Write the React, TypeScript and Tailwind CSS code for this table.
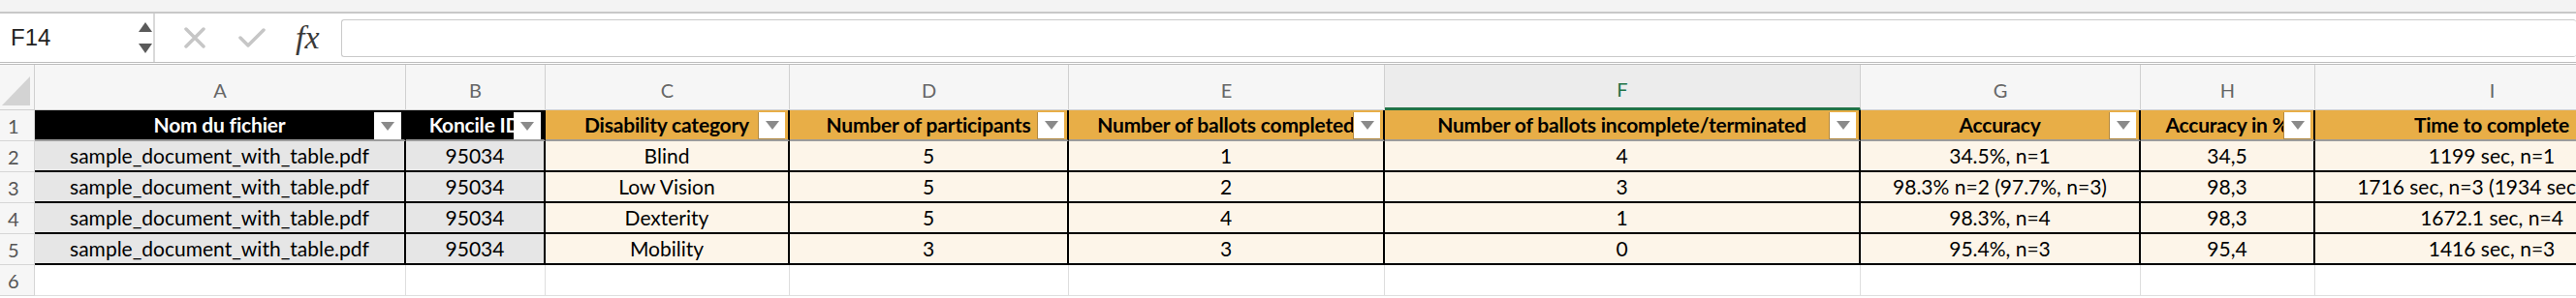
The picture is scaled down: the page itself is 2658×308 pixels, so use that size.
type Col = { letter: string; header: string; dark?: boolean };

const cols: Col[] = [
  { letter: "A", header: "Nom du fichier", dark: true },
  { letter: "B", header: "Koncile ID", dark: true },
  { letter: "C", header: "Disability category" },
  { letter: "D", header: "Number of participants" },
  { letter: "E", header: "Number of ballots completed" },
  { letter: "F", header: "Number of ballots incomplete/terminated" },
  { letter: "G", header: "Accuracy" },
  { letter: "H", header: "Accuracy in %" },
  { letter: "I", header: "Time to complete" },
];

const rows: string[][] = [
  ["sample_document_with_table.pdf", "95034", "Blind", "5", "1", "4", "34.5%, n=1", "34,5", "1199 sec, n=1"],
  ["sample_document_with_table.pdf", "95034", "Low Vision", "5", "2", "3", "98.3% n=2 (97.7%, n=3)", "98,3", "1716 sec, n=3 (1934 sec, n=3)"],
  ["sample_document_with_table.pdf", "95034", "Dexterity", "5", "4", "1", "98.3%, n=4", "98,3", "1672.1 sec, n=4"],
  ["sample_document_with_table.pdf", "95034", "Mobility", "3", "3", "0", "95.4%, n=3", "95,4", "1416 sec, n=3"],
];

const grid =
  "grid grid-cols-[36px_383px_144px_252px_288px_326px_491px_289px_180px_366px]";

const FilterButton = ({ dark }: { dark?: boolean }) => (
  <div
    className={`absolute right-[3px] top-[2px] z-10 flex h-[28px] w-[28px] items-center justify-center bg-white ${
      dark ? "" : "border-b border-l border-[#b3893f]"
    }`}
  >
    <svg width="14" height="9" viewBox="0 0 14 9">
      <path d="M0 0 H14 L7 9 Z" fill="#8a8a8a" />
    </svg>
  </div>
);

const RowNum = ({ n }: { n: number }) => (
  <div className="flex items-center border-r border-b border-[#d6d6d6] bg-[#f6f6f6] pl-[8px] text-[20px] text-[#555]">
    {n}
  </div>
);

export default function App() {
  return (
    <div className="h-[308px] w-[2658px] overflow-hidden bg-white font-['Lato',sans-serif] text-black">
      {/* top strip */}
      <div className="h-[14px] border-b-2 border-[#c8c8c8] bg-[#f3f3f3]" />

      {/* formula bar */}
      <div className="flex h-[53px] items-stretch border-b-[3px] border-double border-[#bdbdbd] bg-white">
        <div className="flex w-[160px] items-center justify-between border-r-2 border-[#d9d9d9] pl-[11px] pr-[1px]">
          <span className="font-['Liberation_Sans',sans-serif] text-[24px] text-[#222]">F14</span>
          <div className="flex flex-col items-center gap-[12px]">
            <svg width="14" height="10" viewBox="0 0 14 10">
              <path d="M0 10 L7 0 L14 10 Z" fill="#5a5a5a" />
            </svg>
            <svg width="14" height="10" viewBox="0 0 14 10">
              <path d="M0 0 H14 L7 10 Z" fill="#5a5a5a" />
            </svg>
          </div>
        </div>
        <div className="flex w-[192px] items-center pl-[30px]">
          <svg width="22" height="22" viewBox="0 0 22 22">
            <path d="M2 2 L20 20 M20 2 L2 20" stroke="#c6c6c6" strokeWidth="3.5" strokeLinecap="round" />
          </svg>
          <svg className="ml-[34px]" width="28" height="22" viewBox="0 0 28 22">
            <path d="M2 11 L10 19 L26 3" stroke="#c6c6c6" strokeWidth="3.5" fill="none" strokeLinecap="round" strokeLinejoin="round" />
          </svg>
          <span className="ml-[31px] font-['Liberation_Serif',serif] text-[34px] italic leading-none text-[#3a3a3a]">
            fx
          </span>
        </div>
        <div className="mt-[6px] mb-[5px] flex-1 rounded-[3px] border border-r-0 border-[#cacaca] bg-white" />
      </div>

      {/* column headers */}
      <div className={`${grid} h-[47px]`}>
        <div className="relative border-r border-b border-[#d0d0d0] bg-[#f6f6f6]">
          <svg className="absolute left-0 top-0" width="35" height="46" viewBox="0 0 35 46">
            <path d="M31 12 L31 42 L2 42 Z" fill="#d3d3d3" />
          </svg>
        </div>
        {cols.map((c) =>
          c.letter === "F" ? (
            <div
              key={c.letter}
              className="flex items-center justify-center border-r border-b-[3px] border-r-[#d0d0d0] border-b-[#217346] bg-[#ececec] pt-[6px] text-[20px] text-[#217346]"
            >
              {c.letter}
            </div>
          ) : (
            <div
              key={c.letter}
              className="flex items-center justify-center border-r border-b border-[#d0d0d0] bg-[#f6f6f6] pt-[6px] text-[20px] text-[#666]"
            >
              {c.letter}
            </div>
          )
        )}
      </div>

      {/* row 1 : table header */}
      <div className={`${grid} h-[32px]`}>
        <RowNum n={1} />
        {cols.map((c) => (
          <div
            key={c.letter}
            className={`relative flex items-center justify-center overflow-hidden whitespace-nowrap border-b-2 border-r-2 border-b-[#9c9c9c] border-r-black text-[21px] font-bold tracking-[-0.2px] ${
              c.dark ? "bg-black text-white" : "bg-[#e8ae47] text-black"
            }`}
          >
            <span>{c.header}</span>
            <FilterButton dark={c.dark} />
          </div>
        ))}
      </div>

      {/* data rows */}
      {rows.map((r, i) => (
        <div key={i} className={`${grid} h-[32px]`}>
          <RowNum n={i + 2} />
          {r.map((v, j) => (
            <div
              key={j}
              className={`flex items-center justify-center overflow-hidden whitespace-nowrap border-b-2 border-r-2 border-black text-[21px] ${
                j < 2 ? "bg-[#e6e6e6]" : "bg-[#fdf5e9]"
              }`}
            >
              <span>{v}</span>
            </div>
          ))}
        </div>
      ))}

      {/* empty row 6 */}
      <div className={`${grid} h-[32px]`}>
        <RowNum n={6} />
        {cols.map((c) => (
          <div key={c.letter} className="border-r border-b border-[#dedede] bg-white" />
        ))}
      </div>
    </div>
  );
}
